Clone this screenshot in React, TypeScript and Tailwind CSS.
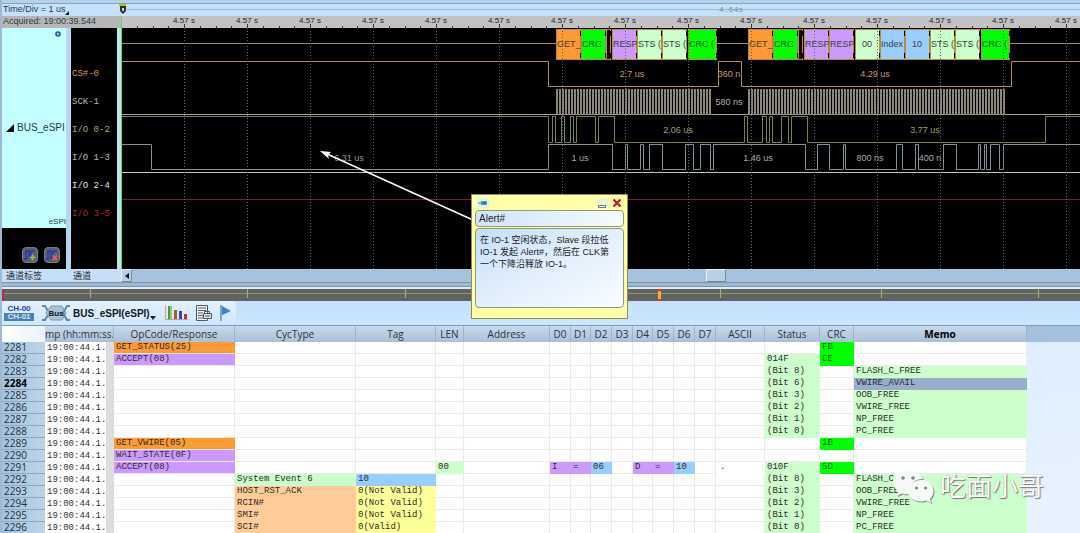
import clsx from 'clsx';

const GRID_START = 63;
const GRID_STEP = 63;
const GRID_COUNT = 15;

const gridLines = Array.from({ length: GRID_COUNT }, (_, i) => GRID_START + i * GRID_STEP);

// 解码块：x / 宽度 / 颜色 / 文本
const blocks = [
  { x: 435, w: 25, fill: '#ff9933', text: 'GET_' },
  { x: 460, w: 25, fill: '#00ff00', text: 'CRC' },
  { x: 485, w: 5, fill: '#1a0500', text: '' },
  { x: 491, w: 25, fill: '#cc99ff', text: 'RESP' },
  { x: 516, w: 25, fill: '#ccffcc', text: 'STS (' },
  { x: 541, w: 25, fill: '#ccffcc', text: 'STS (' },
  { x: 567, w: 29, fill: '#00ff00', text: 'CRC (' },
  { x: 627, w: 25, fill: '#ff9933', text: 'GET_' },
  { x: 652, w: 25, fill: '#00ff00', text: 'CRC' },
  { x: 677, w: 5, fill: '#1a0500', text: '' },
  { x: 683, w: 25, fill: '#cc99ff', text: 'RESP' },
  { x: 708, w: 25, fill: '#cc99ff', text: 'RESP' },
  { x: 734, w: 25, fill: '#ccffcc', text: '00', center: true },
  { x: 759, w: 25, fill: '#99ccff', text: 'Index' },
  { x: 784, w: 25, fill: '#99ccff', text: '10', center: true },
  { x: 809, w: 25, fill: '#ccffcc', text: 'STS (' },
  { x: 834, w: 25, fill: '#ccffcc', text: 'STS (' },
  { x: 860, w: 29, fill: '#00ff00', text: 'CRC (' },
];

const csEdges = [427, 597, 620, 890];
const io0Edges = [
  427, 431, 434, 440, 443, 449, 452, 455, 474, 477, 493, 623, 626, 641, 645, 648, 651, 660, 667, 670, 686, 924,
];
const io1Edges = [
  30, 427, 491, 504, 506, 519, 522, 528, 541, 564, 572, 579, 589, 592, 684, 696, 708, 722, 724, 775, 781, 794, 797,
  822, 835, 857, 859, 863, 865, 869, 878, 882,
];

const waveLabels = [
  { x: 511, y: 49, text: '2.7 us', fill: '#c49a6c' },
  { x: 608, y: 49, text: '360 n', fill: '#c49a6c' },
  { x: 754, y: 49, text: '4.29 us', fill: '#c49a6c' },
  { x: 608, y: 77, text: '580 ns', fill: '#b5ada0' },
  { x: 557, y: 105, text: '2.06 us', fill: '#93a36a' },
  { x: 804, y: 105, text: '3.77 us', fill: '#93a36a' },
  { x: 228, y: 133, text: '6.31 us', fill: '#8d979c' },
  { x: 459, y: 133, text: '1 us', fill: '#a3adb3' },
  { x: 637, y: 133, text: '1.46 us', fill: '#a3adb3' },
  { x: 749, y: 133, text: '800 ns', fill: '#a3adb3' },
  { x: 809, y: 133, text: '400 n', fill: '#a3adb3' },
];

const channels = [
  { name: 'CS#-0', color: 'text-[#d09a58]' },
  { name: 'SCK-1', color: 'text-[#b8b0a4]' },
  { name: 'I/O 0-2', color: 'text-[#a3ab7c]' },
  { name: 'I/O 1-3', color: 'text-[#b0b8bc]' },
  { name: 'I/O 2-4', color: 'text-[#e2e2e2]' },
  { name: 'I/O 3-5', color: 'text-[#a82c2c]' },
];

// 从高电平开始，每个边沿翻转一次
function stepPath(edges: number[], high: number, low: number) {
  let level = high;
  let d = `M0 ${high}.5`;
  edges.forEach((x) => {
    level = level === high ? low : high;
    d += `H${x}.5V${level}.5`;
  });
  return d + 'H4000';
}

function clockPath(from: number, to: number) {
  let d = '';
  for (let x = from; x <= to; x += 3) d += `M${x} 61V87`;
  return d;
}

function Ruler() {
  return (
    <svg className="block w-full h-3 bg-[#c2c2c2]" aria-hidden="true">
      {gridLines.map((x) => (
        <g key={x}>
          <text x={x} y="7" textAnchor="middle" className="fill-[#222] text-[8px]">
            4.57 s
          </text>
          <path d={`M${x}.5 8V12M${x + 16}.5 10V12M${x + 32}.5 10V12M${x + 47}.5 10V12`} stroke="#333" />
        </g>
      ))}
      <path d="M16.5 10V12M32.5 10V12M47.5 10V12" stroke="#333" />
      <path d="M0.5 0V12" stroke="#62d862" />
    </svg>
  );
}

function Waveform() {
  return (
    <svg className="block w-full h-[241px] bg-black" role="img" aria-label="BUS_eSPI">
      <path d="M0 15.5H435M596 15.5H627M889 15.5H4000" stroke="#a08474" />
      {blocks.map((b) => (
        <svg key={b.x} x={b.x} y="1" width={b.w} height="31">
          <rect x="0.5" y="0.5" width={b.w - 1} height="30" fill={b.fill} stroke="#b58c3c" />
          <path d={`M${b.w - 0.5} 2V7M${b.w - 0.5} 24V29`} stroke="#000" />
          <text
            x={b.center ? 12 : 1}
            y="18"
            textAnchor={b.center ? 'middle' : 'start'}
            className="fill-[#35452f] text-[9px]"
          >
            {b.text}
          </text>
        </svg>
      ))}
      <g fill="none">
        <path d={stepPath(csEdges, 33, 58)} stroke="#b08c5c" />
        <path d="M0 86.5H4000" stroke="#a8a07e" />
        <path d={clockPath(436, 591) + clockPath(628, 884)} stroke="#8d867a" strokeWidth="2" />
        <path d={stepPath(io0Edges, 88, 114)} stroke="#74854a" />
        <path d={stepPath(io1Edges, 116, 141)} stroke="#82929c" />
        <path d="M0 144.5H4000" stroke="#b9c2bb" />
        <path d="M0 171.5H4000" stroke="#7c2020" />
      </g>
      {gridLines.map((x) => (
        <path key={x} d={`M${x}.5 0V241`} stroke="#5d665d" strokeDasharray="1 2" />
      ))}
      {waveLabels.map((l) => (
        <text key={`${l.x}-${l.y}`} x={l.x} y={l.y} textAnchor="middle" fill={l.fill} className="text-[9px]">
          {l.text}
        </text>
      ))}
      <path d="M0.5 0V241" stroke="#62d862" />
      {/* 注释箭头 */}
      <path d="M352 192L206 126" stroke="#fff" strokeWidth="1.4" />
      <path d="M199 123L210 124L207 127L208 131Z" fill="#fff" />
    </svg>
  );
}

function SidePanel() {
  return (
    <div className="flex w-[119px] shrink-0 bg-[#b7d5f0]">
      <div className="flex w-16 flex-col bg-black">
        <div className="relative flex h-[200px] items-center bg-[#c4ffff] text-[#1d4444]">
          <svg className="absolute right-1 top-0.5 h-2 w-2" viewBox="0 0 8 8">
            <circle cx="4" cy="4" r="2" fill="#8ed0f0" stroke="#1d6090" strokeWidth="1.6" />
          </svg>
          <svg className="ml-1 mr-[3px] h-2 w-2" viewBox="0 0 8 8">
            <path d="M8 0V8H0Z" fill="#111" />
          </svg>
          <span className="text-[10px] leading-3">BUS_eSPI</span>
          <span className="absolute bottom-0 right-0 text-[8px] leading-3">eSPI</span>
        </div>
        <div className="flex flex-1 items-center justify-end gap-1.5 pr-1.5 pt-3">
          <button aria-label="add" className="block h-4 w-4 rounded-sm border border-[#777b88] bg-[#5c606c]">
            <svg viewBox="0 0 14 14" className="h-3.5 w-3.5" fill="none">
              <path d="M1 11H3V3H6V10H8V3H12" stroke="#2a32b8" strokeWidth="1.5" />
              <path d="M6.500 9.500H12.500M9.500 6.500V12.500" stroke="#84b84a" strokeWidth="2" />
            </svg>
          </button>
          <button aria-label="remove" className="block h-4 w-4 rounded-sm border border-[#777b88] bg-[#5c606c]">
            <svg viewBox="0 0 14 14" className="h-3.5 w-3.5" fill="none">
              <path d="M1 11H3V3H6V10H8V3H12" stroke="#2a32b8" strokeWidth="1.5" />
              <path d="M7.500 7.500L12 12M12 7.500L7.500 12" stroke="#e0604c" strokeWidth="2" />
            </svg>
          </button>
        </div>
      </div>
      <div className="ml-[5px] w-[46px] bg-black pt-[33px]">
        {channels.map((c) => (
          <div
            key={c.name}
            className={clsx(
              "flex h-7 items-center whitespace-nowrap pl-px font-['Liberation_Mono',monospace] text-[9px]",
              c.color
            )}
          >
            {c.name}
          </div>
        ))}
      </div>
      <div className="w-1 bg-[#b9e6ea]" />
    </div>
  );
}

function Note() {
  return (
    <div className="absolute left-[469px] top-[194px] w-[157px] border border-[#8e8e50] bg-[#ffffa8] px-[3px] pb-2.5">
      <div className="flex h-[15px] items-center justify-between px-0.5">
        <button aria-label="pin" className="flex h-2.5 w-3 items-center bg-[#e4f4e8]">
          <svg viewBox="0 0 12 10" className="h-2.5 w-3">
            <path d="M1 5H5" stroke="#3a86a8" />
            <path d="M5 3V7M6 4H9V6H6" stroke="#267ba4" strokeWidth="1.5" fill="#267ba4" />
          </svg>
        </button>
        <div className="flex items-center gap-1">
          <button aria-label="minimize" className="flex h-2.5 w-2.5 items-end bg-[#eef4d8]">
            <span className="block h-[3px] w-2 border border-[#69808c]" />
          </button>
          <button aria-label="close" className="h-2.5 w-2.5">
            <svg viewBox="0 0 10 10" className="h-2.5 w-2.5">
              <path d="M1.500 1.500L8.500 8.500M8.500 1.500L1.500 8.500" stroke="#b81c30" strokeWidth="2.4" />
            </svg>
          </button>
        </div>
      </div>
      <input
        aria-label="note title"
        defaultValue="Alert#"
        className="block h-[17px] w-full rounded-sm border border-[#8d9a80] bg-linear-to-r from-[#cfe4fa] to-[#f6faff] px-[3px] text-[10px] text-[#222]"
      />
      <textarea
        aria-label="note text"
        defaultValue={'在 IO-1 空闲状态，Slave 段拉低\nIO-1 发起 Alert#，然后在 CLK第\n一个下降沿释放 IO-1。'}
        className="mt-px block h-20 w-full resize-none overflow-hidden whitespace-pre rounded-sm border border-[#8d9a80] bg-linear-to-br from-[#c6dffa] via-[#e2effc] to-[#fafdff] px-1 py-[5px] text-[9px] leading-3 text-[#222]"
      />
    </div>
  );
}

function Overview() {
  const ticks = [88, 245, 403, 560, 718, 879, 1036];
  return (
    <svg className="block h-3 w-full bg-[#626262]" aria-hidden="true">
      <path d="M0 4.5H4000" stroke="#8a9a58" />
      {ticks.map((x) => (
        <path key={x} d={`M${x}.5 0V9`} stroke="#a4b470" />
      ))}
      <path d="M1 0V12" stroke="#b02c4c" strokeWidth="2" />
      <path d="M657.500 0V12" stroke="#f0b03c" strokeWidth="3" />
      <path d="M655 1H660M655 11H660" stroke="#d03c2c" strokeWidth="2" />
    </svg>
  );
}

function Toolbar() {
  return (
    <div className="flex h-[25px] items-center border-b border-[#7d9cbc] bg-linear-to-b from-[#c4e0fc] to-[#cbe6ff]">
      <div className="flex h-6 items-center rounded-r bg-linear-to-b from-[#e3f1ff] to-[#cfe7ff] pr-1">
        <button className="flex w-[30px] flex-col ml-0.5 text-center text-[8px] font-bold leading-2">
          <span className="text-[#2c34d0]">CH-00</span>
          <span className="bg-[#4a80b4] text-[#d4e8fa]">CH-01</span>
        </button>
        <button className="ml-[7px] flex items-center">
          <svg className="h-4 w-[30px]" viewBox="0 0 30 16" fill="none">
            <path d="M1 1H4L8 8L4 15H1" stroke="#5f88ac" strokeWidth="2" />
            <path d="M10 1H21L25 8L21 15H10L5 8Z" fill="#a8c4da" stroke="#7898b4" />
            <path d="M29 1H26L22 8L26 15H29" stroke="#5f88ac" strokeWidth="2" />
            <text x="15" y="11" textAnchor="middle" className="fill-[#151515] text-[8px] font-bold">
              Bus
            </text>
          </svg>
          <span className="pl-0.5 text-[10px] font-bold text-[#101820]">BUS_eSPI(eSPI)</span>
          <svg className="mt-2.5 h-1 w-1.5" viewBox="0 0 6 4">
            <path d="M0 0H6L3 4Z" fill="#223" />
          </svg>
        </button>
        <button aria-label="statistics" className="ml-2">
          <svg className="h-4 w-6" viewBox="0 0 24 16">
            <path d="M1.500 0V14.500H24" stroke="#c8a47c" fill="none" />
            <path d="M4 1H8V14H4Z" fill="#4f9440" />
            <path d="M6 1H8V14H6Z" fill="#93cc74" />
            <path d="M10 5H13V14H10Z" fill="#a85c28" />
            <path d="M15 6H18V14H15Z" fill="#3048b0" />
            <path d="M20 9H23V14H20Z" fill="#c82c34" />
          </svg>
        </button>
        <button aria-label="report" className="ml-2">
          <svg className="h-4 w-4" viewBox="0 0 16 16" fill="none">
            <path d="M0.500 0.500H11.500V15.500H0.500Z" fill="#f4f6fa" stroke="#505870" />
            <path d="M2 3H10M2 5.500H10M2 8H7M2 10.500H7M2 13H7" stroke="#505870" />
            <path d="M8.500 8.500V6.500H13.500V8.500" stroke="#50586c" />
            <path d="M7.500 8.500H15.500V13.500H7.500Z" fill="#dde2ea" stroke="#50586c" />
            <path d="M9 11H14" stroke="#50586c" />
          </svg>
        </button>
        <button aria-label="flag" className="ml-2">
          <svg className="h-4 w-3" viewBox="0 0 12 16">
            <path d="M1 0V16" stroke="#6888a8" strokeWidth="1.5" />
            <path d="M2 1L11 6L2 10Z" fill="#3484dc" />
          </svg>
        </button>
      </div>
    </div>
  );
}

const columns = [
  { key: 'time', label: 'mp (hh:mm:ss.r', width: 69 },
  { key: 'op', label: 'OpCode/Response', width: 121 },
  { key: 'cyc', label: 'CycType', width: 121 },
  { key: 'tag', label: 'Tag', width: 80 },
  { key: 'len', label: 'LEN', width: 28 },
  { key: 'addr', label: 'Address', width: 86 },
  { key: 'd0', label: 'D0', width: 21 },
  { key: 'd1', label: 'D1', width: 20 },
  { key: 'd2', label: 'D2', width: 21 },
  { key: 'd3', label: 'D3', width: 21 },
  { key: 'd4', label: 'D4', width: 20 },
  { key: 'd5', label: 'D5', width: 21 },
  { key: 'd6', label: 'D6', width: 21 },
  { key: 'd7', label: 'D7', width: 21 },
  { key: 'ascii', label: 'ASCII', width: 49 },
  { key: 'status', label: 'Status', width: 55 },
  { key: 'crc', label: 'CRC', width: 34 },
  { key: 'memo', label: 'Memo', width: 173 },
];

const ORANGE = 'bg-[#ff9933]';
const PURPLE = 'bg-[#cc99ff]';
const GREEN = 'bg-[#00ff00] text-[#087008]';
const MINT = 'bg-[#ccffcc]';
const BLUE = 'bg-[#99ccff]';
const PEACH = 'bg-[#ffcc99]';
const YELLOW = 'bg-[#ffff99]';
const SELECTED = 'bg-[#98aeca]';

type Cell = [string, string];

const rows: { id: number; cells: Record<string, Cell> }[] = [
  { id: 2281, cells: { op: ['GET_STATUS(25)', ORANGE], crc: ['FB', GREEN] } },
  { id: 2282, cells: { op: ['ACCEPT(08)', PURPLE], status: ['014F', MINT], crc: ['CE', GREEN] } },
  { id: 2283, cells: { status: ['(Bit 8)', MINT], memo: ['FLASH_C_FREE', MINT] } },
  { id: 2284, cells: { status: ['(Bit 6)', MINT], memo: ['VWIRE_AVAIL', SELECTED] } },
  { id: 2285, cells: { status: ['(Bit 3)', MINT], memo: ['OOB_FREE', MINT] } },
  { id: 2286, cells: { status: ['(Bit 2)', MINT], memo: ['VWIRE_FREE', MINT] } },
  { id: 2287, cells: { status: ['(Bit 1)', MINT], memo: ['NP_FREE', MINT] } },
  { id: 2288, cells: { status: ['(Bit 0)', MINT], memo: ['PC_FREE', MINT] } },
  { id: 2289, cells: { op: ['GET_VWIRE(05)', ORANGE], crc: ['1B', GREEN] } },
  { id: 2290, cells: { op: ['WAIT_STATE(0F)', PURPLE] } },
  {
    id: 2291,
    cells: {
      op: ['ACCEPT(08)', PURPLE],
      len: ['00', MINT],
      d0: ['I', PURPLE],
      d1: ['=', PURPLE],
      d2: ['06', BLUE],
      d4: ['D', PURPLE],
      d5: ['=', PURPLE],
      d6: ['10', BLUE],
      ascii: ['.', 'bg-white'],
      status: ['010F', MINT],
      crc: ['5D', GREEN],
    },
  },
  {
    id: 2292,
    cells: {
      cyc: ['System Event 6', MINT],
      tag: ['10', BLUE],
      status: ['(Bit 8)', MINT],
      memo: ['FLASH_C_FREE', MINT],
    },
  },
  {
    id: 2293,
    cells: {
      cyc: ['HOST_RST_ACK', PEACH],
      tag: ['0(Not Valid)', YELLOW],
      status: ['(Bit 3)', MINT],
      memo: ['OOB_FREE', MINT],
    },
  },
  {
    id: 2294,
    cells: {
      cyc: ['RCIN#', PEACH],
      tag: ['0(Not Valid)', YELLOW],
      status: ['(Bit 2)', MINT],
      memo: ['VWIRE_FREE', MINT],
    },
  },
  {
    id: 2295,
    cells: {
      cyc: ['SMI#', PEACH],
      tag: ['0(Not Valid)', YELLOW],
      status: ['(Bit 1)', MINT],
      memo: ['NP_FREE', MINT],
    },
  },
  {
    id: 2296,
    cells: {
      cyc: ['SCI#', PEACH],
      tag: ['0(Valid)', YELLOW],
      status: ['(Bit 0)', MINT],
      memo: ['PC_FREE', MINT],
    },
  },
];

function PacketTable() {
  return (
    <div className="min-h-0 flex-1 overflow-hidden bg-linear-to-br from-[#d4e8fc] to-[#e9f3ff]">
      <table className="w-full table-fixed border-separate border-spacing-0">
        <colgroup>
          <col style={{ width: 43 }} />
          {columns.map((c) => (
            <col key={c.key} style={{ width: c.width }} />
          ))}
          <col />
        </colgroup>
        <thead>
          <tr className="h-4 font-['Open_Sans',sans-serif] text-[10px] leading-[14px] text-[#2a3440]">
            <th className="bg-linear-to-r from-white to-[#eaf2f8] p-0" />
            {columns.map((c) => (
              <th
                key={c.key}
                className={clsx(
                  'overflow-hidden whitespace-nowrap border-r border-[#9db4ca] bg-linear-to-b from-[#c9daea] to-[#a9c0d8] p-0',
                  c.key === 'memo' ? 'font-bold text-black' : 'font-normal',
                  c.key === 'time' && 'text-left'
                )}
              >
                {c.label}
              </th>
            ))}
            <th className="bg-[#a4c0dc] p-0" />
          </tr>
        </thead>
        <tbody>
          {rows.map((row) => (
            <tr key={row.id} className="h-3">
              <th
                className={clsx(
                  "border-b border-[#8fa9c0] bg-linear-to-r from-[#a3c2df] to-[#bdd4e8] py-0 pl-0.5 pr-0 text-left font-['Open_Sans',sans-serif] text-[10px] leading-[11px]",
                  row.id === 2284 ? 'font-bold text-black' : 'font-normal text-[#24303c]'
                )}
              >
                {row.id}
              </th>
              {columns.map((c) => {
                if (c.key === 'time') {
                  return (
                    <td
                      key={c.key}
                      className="overflow-hidden whitespace-nowrap border-r-8 border-[#dcdcdc] bg-white py-0 pl-0.5 pr-0 font-['Liberation_Mono',monospace] text-[9px] leading-3 text-[#333]"
                    >
                      19:00:44.1.
                    </td>
                  );
                }
                const cell = row.cells[c.key];
                return (
                  <td
                    key={c.key}
                    className={clsx(
                      "overflow-hidden whitespace-nowrap border-b border-r border-[#ebebeb] py-0 pr-0 font-['Liberation_Mono',monospace] text-[9px] leading-[11px] text-[#2c2c2c]",
                      c.key === 'ascii' ? 'pl-1' : 'pl-0.5',
                      cell ? cell[1] : 'bg-white',
                      cell && c.key !== 'op' && 'border-b-transparent',
                      cell && 'border-r-transparent'
                    )}
                  >
                    {cell ? cell[0] : ''}
                  </td>
                );
              })}
              <td className="p-0" />
            </tr>
          ))}
        </tbody>
      </table>
    </div>
  );
}

function Watermark() {
  return (
    <div className="pointer-events-none absolute bottom-7 right-9 flex items-center gap-1.5">
      <svg className="h-9 w-[42px] drop-shadow-[1px_1px_0_#888]" viewBox="0 0 42 36" fill="#f6faf6">
        <path d="M16 1C7 1 1 6.500 1 13C1 17 3.500 20 6 22L5 27L10 24.500C13 25.500 15 25.500 17 25C15 16 22 10 31 10C29.500 4.500 23 1 16 1Z" />
        <path d="M29 11C21 11 16 16 16 22C16 28 21.500 32.500 29 32.500C31 32.500 33 32 34.500 31.500L39 34L38 30C40 28 41.500 25.500 41.500 22C41.500 16 36 11 29 11Z" />
        <g fill="#7c8a7c">
          <circle cx="11" cy="9" r="1.8" />
          <circle cx="21" cy="9" r="1.8" />
          <circle cx="24.500" cy="19" r="1.6" />
          <circle cx="33.500" cy="19" r="1.6" />
        </g>
      </svg>
      <span className="text-[26px] leading-8 text-white [text-shadow:1px_1px_1px_#777,0_0_1px_#999]">吃面小哥</span>
    </div>
  );
}

export default function App() {
  return (
    <div className="relative flex h-screen flex-col overflow-hidden border-l-2 border-[#9db9d4] bg-[#c5e2fd] font-['Liberation_Sans','Noto_Sans_CJK_SC',sans-serif]">
      {/* 时间刻度 */}
      <div className="h-[3px] bg-[#b4d0ea]" />
      <div className="flex border-t border-[#86a2be]">
        <div className="w-[119px] shrink-0 whitespace-nowrap text-[9px] text-[#2c3a48]">
          <div className="flex h-3 items-center pl-px">
            Time/Div = 1 us
            <svg className="mt-1.5 h-1 w-1" viewBox="0 0 4 4">
              <path d="M4 0V4H0Z" fill="#111" />
            </svg>
          </div>
          <div className="flex h-3 items-center bg-[#b6b6b6] pl-px">Acquired: 19:00:39.544</div>
        </div>
        <div className="min-w-0 flex-1">
          <svg className="block h-3 w-full overflow-visible" aria-hidden="true">
            <path d="M6 5.5H4000" stroke="#9ab8d4" />
            <path d="M-2 0H5V2H-2Z" fill="#b8c800" />
            <path d="M-1 2H5V7L2 10L-1 7Z" fill="#28323c" />
            <path d="M1 4H3V7H1Z" fill="#c8d8e8" />
            <text x="598" y="8" className="fill-[#7a8c9e] font-['Liberation_Mono',monospace] text-[8px]">
              4.64s
            </text>
          </svg>
          <Ruler />
        </div>
      </div>

      {/* 波形区域 */}
      <div className="flex">
        <SidePanel />
        <div className="min-w-0 flex-1">
          <Waveform />
        </div>
      </div>
      <div className="flex h-[13px] items-stretch bg-[#a5c2de]">
        <div className="flex w-[119px] items-center bg-[#c6def6] text-[9px] leading-3 text-[#1c2630]">
          <span className="w-[71px] pl-1">通道标签</span>
          <span>通道</span>
        </div>
        <button
          aria-label="scroll left"
          className="flex w-[11px] items-center justify-center border border-l-[#e8f2fa] border-t-[#e8f2fa] border-b-[#7890a8] border-r-[#7890a8] bg-[#b8cee2]"
        >
          <svg className="h-1.5 w-1" viewBox="0 0 4 6">
            <path d="M4 0V6L0 3Z" fill="#111" />
          </svg>
        </button>
        <div className="flex flex-1">
          <div className="w-[60.6%]" />
          <div className="w-5 border border-b-[#708aa4] border-l-[#e8f2fa] border-r-[#708aa4] border-t-[#e8f2fa] bg-[#b8cfe4]" />
        </div>
      </div>
      <div className="h-[5px] border-y border-[#7a94ae] bg-[#9db9d4]" />
      <div className="h-0.5 bg-[#dfeaf5]" />
      <Overview />

      <Toolbar />
      <PacketTable />

      <Note />
      <Watermark />
    </div>
  );
}
